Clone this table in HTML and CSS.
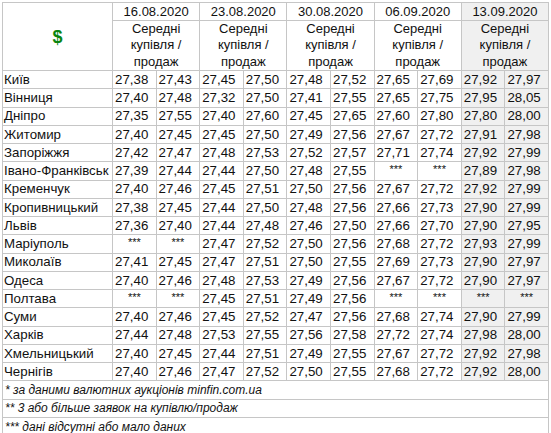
FILE: index.html
```html
<!DOCTYPE html>
<html lang="uk">
<head>
<meta charset="utf-8">
<link rel="stylesheet" href="styles.css">
</head>
<body>
<table class="rates">
  <colgroup>
    <col class="c-label">
    <col class="c-num"><col class="c-num"><col class="c-num"><col class="c-num"><col class="c-num">
    <col class="c-num"><col class="c-num"><col class="c-num"><col class="c-num"><col class="c-num">
  </colgroup>
  <thead>
    <tr class="h1">
      <th rowspan="2" class="cur">$</th>
      <th colspan="2">16.08.2020</th>
      <th colspan="2">23.08.2020</th>
      <th colspan="2">30.08.2020</th>
      <th colspan="2">06.09.2020</th>
      <th colspan="2" class="hl">13.09.2020</th>
    </tr>
    <tr class="h2">
      <th colspan="2">Середні<br>купівля /<br>продаж</th>
      <th colspan="2">Середні<br>купівля /<br>продаж</th>
      <th colspan="2">Середні<br>купівля /<br>продаж</th>
      <th colspan="2">Середні<br>купівля /<br>продаж</th>
      <th colspan="2" class="hl">Середні<br>купівля /<br>продаж</th>
    </tr>
  </thead>
  <tbody>
    <tr><td class="city">Київ</td><td>27,38</td><td>27,43</td><td>27,45</td><td>27,50</td><td>27,48</td><td>27,52</td><td>27,65</td><td>27,69</td><td class="hl">27,92</td><td class="hl">27,97</td></tr>
    <tr><td class="city">Вінниця</td><td>27,40</td><td>27,48</td><td>27,32</td><td>27,50</td><td>27,41</td><td>27,55</td><td>27,65</td><td>27,75</td><td class="hl">27,95</td><td class="hl">28,05</td></tr>
    <tr><td class="city">Дніпро</td><td>27,35</td><td>27,55</td><td>27,40</td><td>27,60</td><td>27,45</td><td>27,65</td><td>27,60</td><td>27,80</td><td class="hl">27,80</td><td class="hl">28,00</td></tr>
    <tr><td class="city">Житомир</td><td>27,40</td><td>27,45</td><td>27,45</td><td>27,50</td><td>27,49</td><td>27,56</td><td>27,67</td><td>27,72</td><td class="hl">27,91</td><td class="hl">27,98</td></tr>
    <tr><td class="city">Запоріжжя</td><td>27,42</td><td>27,47</td><td>27,48</td><td>27,53</td><td>27,52</td><td>27,57</td><td>27,71</td><td>27,74</td><td class="hl">27,92</td><td class="hl">27,99</td></tr>
    <tr><td class="city">Івано-Франківськ</td><td>27,39</td><td>27,44</td><td>27,44</td><td>27,50</td><td>27,48</td><td>27,55</td><td class="na">***</td><td class="na">***</td><td class="hl">27,89</td><td class="hl">27,98</td></tr>
    <tr><td class="city">Кременчук</td><td>27,40</td><td>27,46</td><td>27,45</td><td>27,51</td><td>27,50</td><td>27,56</td><td>27,67</td><td>27,72</td><td class="hl">27,92</td><td class="hl">27,99</td></tr>
    <tr><td class="city">Кропивницький</td><td>27,38</td><td>27,45</td><td>27,44</td><td>27,50</td><td>27,48</td><td>27,56</td><td>27,66</td><td>27,73</td><td class="hl">27,90</td><td class="hl">27,99</td></tr>
    <tr><td class="city">Львів</td><td>27,36</td><td>27,40</td><td>27,44</td><td>27,48</td><td>27,46</td><td>27,50</td><td>27,66</td><td>27,70</td><td class="hl">27,90</td><td class="hl">27,95</td></tr>
    <tr><td class="city">Маріуполь</td><td class="na">***</td><td class="na">***</td><td>27,47</td><td>27,52</td><td>27,50</td><td>27,56</td><td>27,68</td><td>27,72</td><td class="hl">27,93</td><td class="hl">27,99</td></tr>
    <tr><td class="city">Миколаїв</td><td>27,41</td><td>27,45</td><td>27,47</td><td>27,51</td><td>27,50</td><td>27,55</td><td>27,69</td><td>27,73</td><td class="hl">27,90</td><td class="hl">27,97</td></tr>
    <tr><td class="city">Одеса</td><td>27,40</td><td>27,46</td><td>27,48</td><td>27,53</td><td>27,49</td><td>27,56</td><td>27,67</td><td>27,72</td><td class="hl">27,90</td><td class="hl">27,97</td></tr>
    <tr><td class="city">Полтава</td><td class="na">***</td><td class="na">***</td><td>27,45</td><td>27,51</td><td>27,49</td><td>27,56</td><td class="na">***</td><td class="na">***</td><td class="hl na">***</td><td class="hl na">***</td></tr>
    <tr><td class="city">Суми</td><td>27,40</td><td>27,46</td><td>27,45</td><td>27,52</td><td>27,47</td><td>27,56</td><td>27,68</td><td>27,74</td><td class="hl">27,90</td><td class="hl">27,99</td></tr>
    <tr><td class="city">Харків</td><td>27,44</td><td>27,48</td><td>27,53</td><td>27,55</td><td>27,56</td><td>27,58</td><td>27,72</td><td>27,74</td><td class="hl">27,98</td><td class="hl">28,00</td></tr>
    <tr><td class="city">Хмельницький</td><td>27,40</td><td>27,45</td><td>27,44</td><td>27,51</td><td>27,49</td><td>27,55</td><td>27,67</td><td>27,72</td><td class="hl">27,92</td><td class="hl">27,98</td></tr>
    <tr><td class="city">Чернігів</td><td>27,40</td><td>27,46</td><td>27,47</td><td>27,52</td><td>27,50</td><td>27,55</td><td>27,68</td><td>27,72</td><td class="hl">27,92</td><td class="hl">28,00</td></tr>
  </tbody>
  <tfoot>
    <tr><td colspan="11" class="note">* за даними валютних аукціонів minfin.com.ua</td></tr>
    <tr><td colspan="11" class="note">** 3 або більше заявок на купівлю/продаж</td></tr>
    <tr><td colspan="11" class="note">*** дані відсутні або мало даних</td></tr>
  </tfoot>
</table>
</body>
</html>
```

FILE: styles.css
```css
html, body {
  margin: 0;
  padding: 0;
  background: #ffffff;
}

body {
  padding: 2px 0 0 2px;
  font-family: "Liberation Sans", Arial, sans-serif;
  color: #111111;
}

.rates {
  border-collapse: collapse;
  table-layout: fixed;
  width: 546px;
  font-size: 13px;
}

.c-label { width: 110px; }
.c-num { width: 43.6px; }

.rates th,
.rates td {
  border: 1px solid #c6c6c6;
  padding: 0 2px;
  white-space: nowrap;
  overflow: visible;
}

.rates th {
  font-weight: normal;
  text-align: center;
  vertical-align: middle;
}

.h1 { height: 18px; }
.h1 th { line-height: 16px; }

.h2 { height: 50px; }
.h2 th { line-height: 16.4px; padding-top: 0; padding-bottom: 0; }

.rates th.cur {
  color: #0a850f;
  font-weight: bold;
  font-size: 18px;
}

.rates tbody tr { height: 18.25px; }

.rates tbody td {
  font-size: 13.3px;
  line-height: 16px;
  text-align: left;
  vertical-align: middle;
}

.rates td.city {
  padding-left: 1px;
  padding-right: 0;
}

.rates td.na {
  text-align: center;
  font-size: 11px;
  vertical-align: top;
  line-height: 14px;
}

.rates .hl {
  background: #f0f0f0;
}

.rates tfoot tr { height: 18.25px; }

.rates td.note {
  font-style: italic;
  font-size: 12px;
  line-height: 16px;
  padding-left: 2px;
}
```
